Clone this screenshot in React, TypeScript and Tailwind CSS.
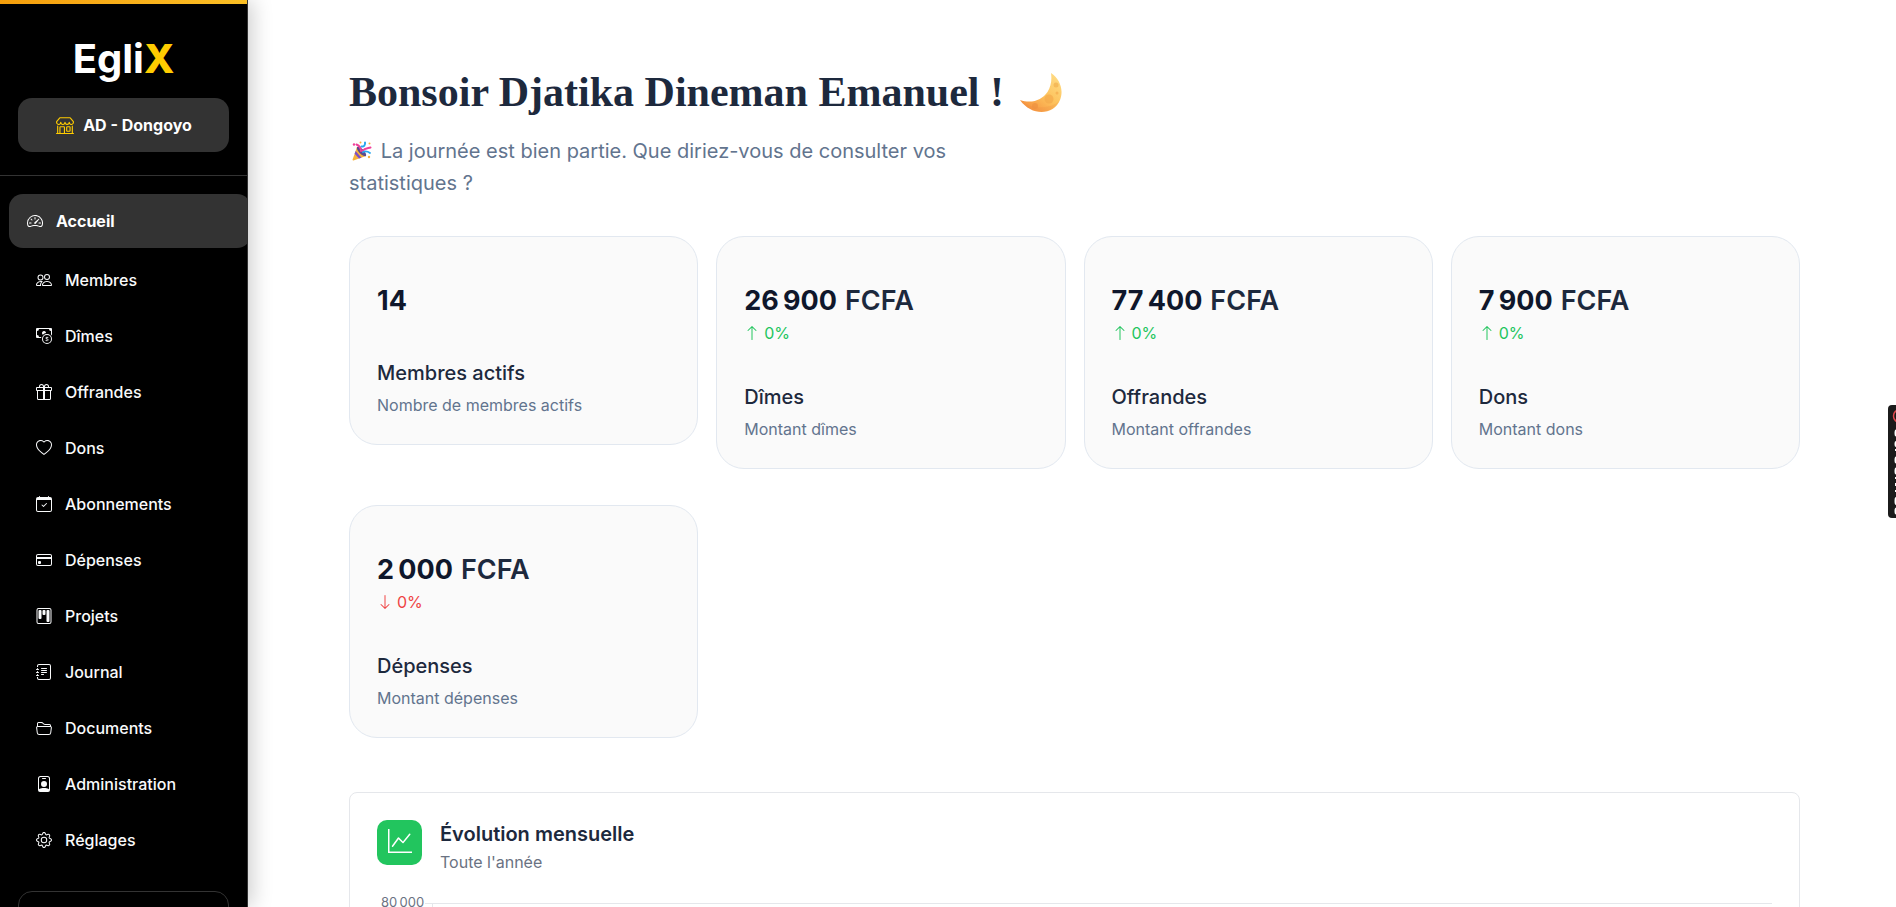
import React from 'react'
import {
  BsArrowDown,
  BsArrowUp,
  BsCalendarCheck,
  BsCashCoin,
  BsCreditCard,
  BsFolder2Open,
  BsGear,
  BsGift,
  BsGraphUp,
  BsHeart,
  BsJournalText,
  BsKanban,
  BsPeople,
  BsPersonBadge,
  BsShop,
  BsSpeedometer2,
} from 'react-icons/bs'

const navItems = [
  { label: 'Membres', icon: BsPeople },
  { label: 'Dîmes', icon: BsCashCoin },
  { label: 'Offrandes', icon: BsGift },
  { label: 'Dons', icon: BsHeart },
  { label: 'Abonnements', icon: BsCalendarCheck },
  { label: 'Dépenses', icon: BsCreditCard },
  { label: 'Projets', icon: BsKanban },
  { label: 'Journal', icon: BsJournalText },
  { label: 'Documents', icon: BsFolder2Open },
  { label: 'Administration', icon: BsPersonBadge },
  { label: 'Réglages', icon: BsGear },
]

type Stat = {
  value: string
  unit?: string
  trend?: 'up' | 'down'
  title: string
  text: string
}

// thousands are separated by a narrow no-break space
const stats: Stat[] = [
  { value: '14', title: 'Membres actifs', text: 'Nombre de membres actifs' },
  { value: '26\u202f900', unit: 'FCFA', trend: 'up', title: 'Dîmes', text: 'Montant dîmes' },
  { value: '77\u202f400', unit: 'FCFA', trend: 'up', title: 'Offrandes', text: 'Montant offrandes' },
  { value: '7\u202f900', unit: 'FCFA', trend: 'up', title: 'Dons', text: 'Montant dons' },
  { value: '2\u202f000', unit: 'FCFA', trend: 'down', title: 'Dépenses', text: 'Montant dépenses' },
]

const MoonIcon = () => (
  <svg viewBox="0 -2 46 44" className="w-[46px] h-11" aria-hidden="true">
    <defs>
      <linearGradient id="moon" x1="1" y1="0" x2="0.2" y2="1">
        <stop offset="0" stopColor="#ffe08a" />
        <stop offset="0.55" stopColor="#fdc25c" />
        <stop offset="1" stopColor="#f58f3d" />
      </linearGradient>
    </defs>
    <path d="M33 1C42 7 46 18 42 28C36 43 14 45 2 28C14 32 24 28 29.500 20C33 14 34 8 33 1Z" fill="url(#moon)" />
    <path d="M2 28C13 43 34 43 41 29C33 37 14 38 2 28Z" fill="#e9853f" opacity="0.2" />
    <circle cx="31" cy="27" r="4.500" fill="#f3a94b" opacity="0.7" />
    <circle cx="38" cy="13" r="2.500" fill="#f3b452" opacity="0.8" />
    <circle cx="17" cy="34" r="3" fill="#ee9240" opacity="0.7" />
    <circle cx="39" cy="21" r="1.500" fill="#f3a94b" opacity="0.7" />
  </svg>
)

const PartyIcon = () => (
  <svg viewBox="0 0 20 20" className="inline-block w-5 h-5 mx-[3px] align-[-3px]" aria-hidden="true">
    <path d="M5 6L14 15L1.500 19.500C.8 19.700.4 19.200.6 18.600Z" fill="#f7b23b" />
    <path d="M3.600 10L9.500 16.700L7 17.600L2.600 12.800Z" fill="#7c4fc4" />
    <ellipse cx="9.500" cy="10.500" rx="2.400" ry="6.200" transform="rotate(-45 9.500 10.500)" fill="#5b4a8c" />
    <path d="M9 10C9 7 8 5 4.500 3.500" fill="none" stroke="#f0409a" strokeWidth="2" strokeLinecap="round" />
    <path d="M9.500 5.500C12 6 13.500 4 13 1.500" fill="none" stroke="#2aa7ee" strokeWidth="2" strokeLinecap="round" />
    <path d="M10.500 10C12.500 7.500 15 7.500 18.500 6.500" fill="none" stroke="#f0409a" strokeWidth="2" strokeLinecap="round" />
    <path d="M11 11C13 10 16 10.500 18 12" fill="none" stroke="#2aa7ee" strokeWidth="1.800" strokeLinecap="round" />
    <circle cx="2" cy="3.500" r="1.200" fill="#f0409a" />
    <circle cx="8.500" cy="1.500" r="1" fill="#f7b23b" />
    <circle cx="17.500" cy="2.500" r="1" fill="#f7b23b" />
    <circle cx="17" cy="16" r="1.200" fill="#f7b23b" />
  </svg>
)

const Sidebar = () => (
  <aside className="relative z-10 w-[248px] shrink-0 overflow-hidden border-r border-[#333] bg-black text-white">
    <div className="h-1 bg-linear-to-r from-[#f59e0b] to-[#fbbf24]" />
    <div className="flex flex-col items-center px-[18px] pt-8 pb-[23px] border-b border-[#333]">
      <a href="#" className="text-[40px] leading-[46px] font-bold">
        Egli<span className="font-extrabold text-[#ffcc00]">X</span>
      </a>
      <button className="mt-4 flex h-[54px] w-full items-center justify-center gap-2 rounded-[14px] bg-[#333] text-base font-bold">
        <BsShop className="h-[18px] w-5 text-[#ffcc00]" />
        AD - Dongoyo
      </button>
    </div>
    <nav className="pt-[18px]">
      <a href="#" className="ml-[9px] -mr-1 flex h-[54px] items-center gap-[13px] rounded-[14px] bg-[#333] pl-[18px] text-base font-bold">
        <BsSpeedometer2 className="size-4" />
        Accueil
      </a>
      <div className="mt-[6px] flex flex-col gap-1">
        {navItems.map(({ label, icon: Icon }) => (
          <a key={label} href="#" className="flex h-[52px] items-center gap-[13px] pl-9 text-base font-medium text-gray-50">
            <Icon className="size-4" />
            {label}
          </a>
        ))}
      </div>
    </nav>
    <div className="mx-[18px] mt-[25px] h-20 rounded-[14px] border border-[#333]" />
  </aside>
)

const StatCard = ({ stat }: { stat: Stat }) => (
  <div className="rounded-[28px] border border-slate-200 bg-[#fafafa] px-[27px] pt-[44px] pb-[27px]">
    <p className="flex items-center gap-2 text-[27px] leading-10">
      <span className="font-bold text-slate-900">{stat.value}</span>
      {stat.unit && <span className="font-semibold text-slate-800">{stat.unit}</span>}
    </p>
    {stat.trend && (
      <p className={`flex h-6 items-center gap-1 text-base ${stat.trend === 'up' ? 'text-[#22c55e]' : 'text-[#ef4444]'}`}>
        {stat.trend === 'up' ? <BsArrowUp className="size-4" /> : <BsArrowDown className="size-4" />}
        0%
      </p>
    )}
    <h2 className="mt-9 text-xl leading-8 font-medium text-slate-800">{stat.title}</h2>
    <p className="mt-1 text-base leading-6 text-slate-500">{stat.text}</p>
  </div>
)

// collapsed tab that peeks out of the right edge of the window
const EdgeTab = () => (
  <button aria-label="Ouvrir" className="absolute right-0 top-[405px] h-[113px] w-2 overflow-hidden rounded-l bg-[#1b1b1b]">
    <svg viewBox="0 0 8 113" className="h-[113px] w-2">
      <circle cx="12" cy="11" r="6.500" fill="none" stroke="#e0484d" strokeWidth="1.500" />
      <g fill="#fff">
        <ellipse cx="8" cy="28" rx="1.500" ry="3.500" />
        <ellipse cx="8" cy="39" rx="1.500" ry="3" />
        <rect x="7" y="44" width="1" height="2" />
        <ellipse cx="8" cy="55" rx="1.500" ry="3.500" />
        <ellipse cx="8" cy="66" rx="1.500" ry="3.500" />
        <rect x="7" y="72" width="1" height="2" />
        <rect x="7" y="78" width="1" height="3" />
        <rect x="7" y="85" width="1" height="2" />
        <ellipse cx="8" cy="96" rx="1.500" ry="4" />
        <ellipse cx="8" cy="106" rx="1.500" ry="3.500" />
      </g>
    </svg>
  </button>
)

const App = () => {
  return (
    <div className="relative flex h-screen overflow-hidden bg-white font-['Inter',sans-serif]">
      <div className="flex shrink-0 shadow-[4px_0_20px_rgba(0,0,0,0.2)]">
        <Sidebar />
      </div>
      <main className="min-w-0 flex-1 pt-16 pr-24 pl-[101px]">
        <h1 className="flex items-center gap-[14px] font-['Liberation_Serif',serif] text-[42px] leading-[56px] font-bold text-slate-800">
          Bonsoir Djatika Dineman Emanuel !
          <MoonIcon />
        </h1>
        <p className="mt-[15px] max-w-[620px] text-xl leading-8 text-slate-500">
          <PartyIcon /> La journée est bien partie. Que diriez-vous de consulter vos statistiques ?
        </p>
        <section className="mt-[37px] grid grid-cols-4 items-start gap-x-[18px] gap-y-9">
          {stats.map((stat) => (
            <StatCard key={stat.title} stat={stat} />
          ))}
        </section>
        <section className="mt-[54px] rounded-lg border border-gray-200 px-[27px] pt-[27px]">
          <div className="flex items-start gap-[18px]">
            <div className="flex size-[45px] items-center justify-center rounded-[10px] bg-[#22c55e] pb-1 text-white">
              <BsGraphUp className="size-6" />
            </div>
            <div>
              <h2 className="text-xl leading-7 font-semibold text-slate-800">Évolution mensuelle</h2>
              <p className="text-base leading-7 text-gray-500">Toute l'année</p>
            </div>
          </div>
          <div className="mt-4 flex items-start">
            <span className="w-12 pl-1 text-[13px] leading-5 text-gray-500">{'80\u202f000'}</span>
            <div className="mt-[11px] w-[7px] border-t border-gray-200" />
            <div className="mt-[11px] h-48 flex-1 border-t border-l border-gray-200" />
          </div>
        </section>
      </main>
      <EdgeTab />
    </div>
  )
}

export default App
